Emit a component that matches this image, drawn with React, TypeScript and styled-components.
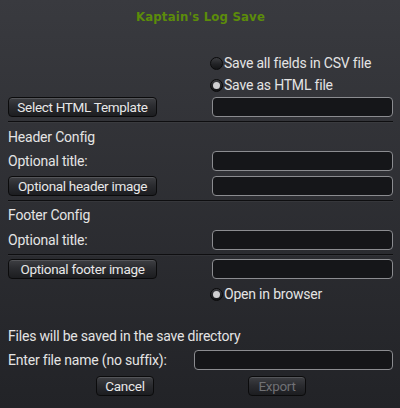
import React from "react";
import styled, { createGlobalStyle } from "styled-components";

const Global = createGlobalStyle`
  html, body { margin: 0; padding: 0; background: #2b2c30; }
  body { font-family: Roboto, "Liberation Sans", Arial, sans-serif; }
`;

const Window = styled.div`
  width: 400px;
  height: 408px;
  box-sizing: border-box;
  background: linear-gradient(#393a3f, #222327);
  padding: 0 7px 0 8px;
  display: flex;
  flex-direction: column;
  color: #e4e4e4;
  font-size: 14px;
  letter-spacing: -0.2px;
  overflow: hidden;
`;

const Title = styled.div`
  height: 32px;
  display: flex;
  align-items: center;
  justify-content: center;
  font-family: "DejaVu Sans Condensed", "DejaVu Sans", sans-serif;
  font-stretch: condensed;
  font-weight: bold;
  font-size: 13px;
  color: #5c8c0a;
  letter-spacing: 0.2px;
`;

const Row = styled.div<{ $top: number; $h?: number }>`
  margin-top: ${(p) => p.$top}px;
  height: ${(p) => p.$h ?? 20}px;
  display: flex;
  align-items: center;
  justify-content: space-between;
`;

const RightRow = styled(Row)`
  justify-content: flex-start;
  padding-left: 202px;
`;

const Label = styled.span`
  white-space: nowrap;
`;

const Button = styled.button<{ $w: number; $disabled?: boolean }>`
  width: ${(p) => p.$w}px;
  height: 20px;
  box-sizing: border-box;
  padding: 0;
  border: 1px solid #0b0b0c;
  border-radius: 4px;
  background: linear-gradient(#3e3f43 0%, #2b2c30 45%, #1c1d20 100%);
  box-shadow: inset 0 1px 0 rgba(255, 255, 255, 0.12);
  color: ${(p) => (p.$disabled ? "#707175" : "#e8e8e8")};
  font-family: Roboto, "Liberation Sans", Arial, sans-serif;
  font-size: 13.5px;
  letter-spacing: -0.3px;
  line-height: 18px;
  text-align: center;
`;

const Input = styled.div<{ $w: number }>`
  width: ${(p) => p.$w}px;
  height: 20px;
  box-sizing: border-box;
  border: 1px solid #8b8c90;
  border-radius: 4px;
  background: #151619;
`;

const Sep = styled.div<{ $top: number }>`
  margin-top: ${(p) => p.$top}px;
  height: 1px;
  background: #0e0e10;
  box-shadow: 0 1px 0 rgba(255, 255, 255, 0.04);
`;

const Radio = styled.span<{ $on?: boolean }>`
  width: 13px;
  height: 13px;
  box-sizing: border-box;
  border-radius: 50%;
  border: 1px solid #0a0a0b;
  background: linear-gradient(#3c3d41, #222326 55%, #141517);
  display: inline-flex;
  align-items: center;
  justify-content: center;
  margin-right: 1px;
  &::after {
    content: "";
    display: ${(p) => (p.$on ? "block" : "none")};
    width: 7px;
    height: 7px;
    border-radius: 50%;
    background: #cfcfd1;
  }
`;

const ButtonBar = styled.div`
  margin-top: 6px;
  height: 19px;
  display: flex;
  padding-left: 88px;
  gap: 94px;
`;

export default function App() {
  return (
    <>
      <Global />
      <Window>
        <Title>Kaptain's Log Save</Title>
        <RightRow $top={20} $h={22}>
          <Radio />
          <Label>Save all fields in CSV file</Label>
        </RightRow>
        <RightRow $top={0} $h={22}>
          <Radio $on />
          <Label>Save as HTML file</Label>
        </RightRow>
        <Row $top={1}>
          <Button $w={149}>Select HTML Template</Button>
          <Input $w={181} />
        </Row>
        <Sep $top={4} />
        <Row $top={4} $h={22}>
          <Label>Header Config</Label>
        </Row>
        <Row $top={3}>
          <Label>Optional title:</Label>
          <Input $w={181} />
        </Row>
        <Row $top={5}>
          <Button $w={149}>Optional header image</Button>
          <Input $w={181} />
        </Row>
        <Sep $top={4} />
        <Row $top={3} $h={22}>
          <Label>Footer Config</Label>
        </Row>
        <Row $top={4}>
          <Label>Optional title:</Label>
          <Input $w={181} />
        </Row>
        <Sep $top={4} />
        <Row $top={4}>
          <Button $w={149}>Optional footer image</Button>
          <Input $w={181} />
        </Row>
        <RightRow $top={4} $h={22}>
          <Radio $on />
          <Label>Open in browser</Label>
        </RightRow>
        <Row $top={20} $h={22}>
          <Label>Files will be saved in the save directory</Label>
        </Row>
        <Row $top={3}>
          <Label>Enter file name (no suffix):</Label>
          <Input $w={199} />
        </Row>
        <ButtonBar>
          <Button $w={58}>Cancel</Button>
          <Button $w={58} $disabled>Export</Button>
        </ButtonBar>
      </Window>
    </>
  );
}
